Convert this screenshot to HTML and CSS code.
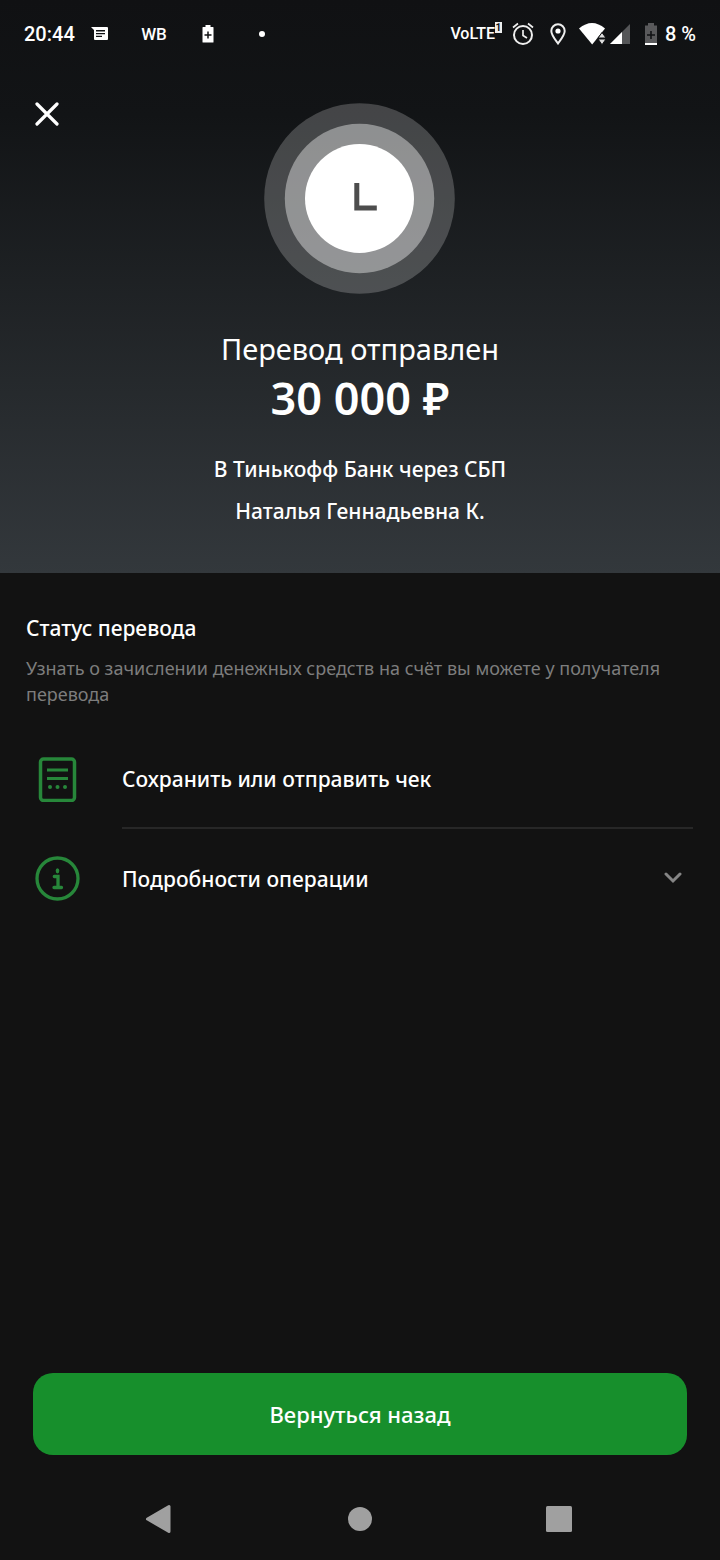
FILE: index.html
```html
<!DOCTYPE html>
<html lang="ru">
<head>
<meta charset="utf-8">
<meta name="viewport" content="width=device-width, initial-scale=1">
<title>Перевод отправлен</title>
<link rel="stylesheet" href="styles.css">
</head>
<body>
<div class="screen">
  <header class="hero">
    <div class="status-bar">
      <div class="status-left">
        <span class="clock">20:44</span>
        <span class="slot"><svg width="18" height="16" viewBox="0 0 18 16"><path fill="#fff" d="M0 1h16a1 1 0 0 1 1 1v11a1 1 0 0 1-1 1H4a1 1 0 0 1-1-1V4z"/><path stroke="#111214" stroke-width="1.400" d="M5 4.800h9M5 7.600h9M5 10.400h6"/></svg></span>
        <span class="slot app-name">WB</span>
        <span class="slot"><svg width="12" height="18" viewBox="0 0 12 18"><path fill="#fff" d="M3.500 0h5v2H11q.5 0 .5.500V17q0 .5-.5.500H1Q.5 17.500.5 17V2.500Q.5 2 1 2h2.500z"/><path stroke="#111214" stroke-width="1.500" d="M6 6.500v7M2.500 10h7"/></svg></span>
        <span class="slot"><span class="dot"></span></span>
      </div>
      <div class="status-right">
        <span class="volte"><span>VoLTE</span><span class="sim">1</span></span>
        <svg width="22" height="24" viewBox="0 0 22 24" fill="none" stroke="#eee"><circle cx="11" cy="13" r="9" stroke-width="2"/><path stroke-width="1.700" d="M11 8v5.500l4 2.500M1 5.500l5-4M21 5.500l-5-4"/></svg>
        <svg class="pin" width="16" height="22" viewBox="0 0 16 22"><path fill="none" stroke="#eee" stroke-width="2" d="M8 20.500C5 16.500 1.300 12 1.300 8a6.700 6.700 0 0 1 13.400 0c0 4-3.700 8.500-6.700 12.500z"/><circle cx="8" cy="8" r="2.600" fill="#fff"/></svg>
        <svg class="wifi" width="27" height="22" viewBox="0 0 27 22"><path fill="#fff" d="M0 5.500Q13-5.500 26 5.500L13.200 21.500z"/><path fill="#ddd" stroke="#111214" stroke-width="1" d="M19 15L23 9.500l4 5.500zM19 16L23 21.800l4-5.800z"/></svg>
        <svg class="signal" width="20" height="20" viewBox="0 0 20 20"><path fill="#555658" d="M0 20L20 0v20z"/><path fill="#fff" d="M0 20L12 8v12z"/></svg>
        <svg class="battery" width="12" height="22" viewBox="0 0 12 22"><path fill="#59595b" d="M3 0h6v2.500h3V20H0V2.500h3z"/><path fill="#fff" d="M0 20h12v2H0z"/><path stroke="#111214" stroke-width="1.600" d="M6 8v8M2 12h8"/></svg>
        <span>8 %</span>
      </div>
    </div>
    <button class="close" type="button" aria-label="Закрыть"><svg width="24" height="24" viewBox="0 0 24 24"><path stroke="#fff" stroke-width="3.200" stroke-linecap="round" d="M2 2l20 20M22 2L2 22"/></svg></button>
    <div class="halo"><svg width="192" height="192" viewBox="0 0 192 192"><circle cx="95.500" cy="96.500" r="95.300" fill="#fff" fill-opacity=".21"/><circle cx="95.500" cy="96.500" r="74.700" fill="#fff" fill-opacity=".4"/><circle cx="95.500" cy="96.500" r="54.500" fill="#fff"/><path fill="none" stroke="#4d4d4d" stroke-width="5" d="M92.800 81v25H112.800"/></svg></div>
    <h1 class="title">Перевод отправлен</h1>
    <p class="amount">30 000 ₽</p>
    <p class="detail">В Тинькофф Банк через СБП</p>
    <p class="detail">Наталья Геннадьевна К.</p>
  </header>
  <main class="content">
    <h2 class="section-title">Статус перевода</h2>
    <p class="note">Узнать о зачислении денежных средств на счёт вы можете у получателя перевода</p>
    <button class="row" type="button">
      <svg class="row-icon" width="46" height="46" viewBox="0 0 46 46"><rect x="5.500" y="3" width="34" height="41.500" rx="3" fill="none" stroke="#27873a" stroke-width="3.500"/><path stroke="#27873a" stroke-width="3.200" d="M12 14h21M12 22.500h21"/><g fill="#27873a"><circle cx="15" cy="31" r="2"/><circle cx="22.500" cy="31" r="2"/><circle cx="30" cy="31" r="2"/></g></svg>
      <span class="row-label">Сохранить или отправить чек</span>
    </button>
    <hr class="divider">
    <button class="row" type="button" aria-expanded="false">
      <svg class="row-icon" width="46" height="46" viewBox="0 0 46 46" fill="none" stroke="#27873a"><circle cx="22.500" cy="22.500" r="20.500" stroke-width="3.300"/><path stroke-width="3.300" stroke-linecap="round" d="M19.300 20.500h3.700V31M19 31.500h7.500"/><ellipse cx="22.500" cy="14.800" rx="1.800" ry="2.600" fill="#27873a" stroke="none"/></svg>
      <span class="row-label">Подробности операции</span>
      <svg width="18" height="14" viewBox="0 0 18 14"><path fill="none" stroke="#858585" stroke-width="3" stroke-linecap="round" d="M2 2l7 7 7-7"/></svg>
    </button>
  </main>
  <footer class="actions"><button class="primary" type="button">Вернуться назад</button></footer>
  <nav class="system-nav" aria-label="Система">
    <button type="button" aria-label="Назад"><svg width="28" height="30" viewBox="0 0 28 30"><path fill="#a0a0a0" stroke="#a0a0a0" stroke-width="3" stroke-linejoin="round" d="M24 2.500v25L2.500 15z"/></svg></button>
    <button type="button" aria-label="Домой"><svg width="26" height="26" viewBox="0 0 26 26"><circle cx="13" cy="13" r="12" fill="#a0a0a0"/></svg></button>
    <button type="button" aria-label="Недавние"><svg width="26" height="26" viewBox="0 0 26 26"><rect width="26" height="26" rx="1.500" fill="#a0a0a0"/></svg></button>
  </nav>
</div>
</body>
</html>
```
FILE: styles.css
```css
* { box-sizing: border-box; }
body { margin: 0; background: #121212; color: #fff; font-family: "Noto Sans", "Open Sans", sans-serif; font-size: 21px; font-weight: 500; line-height: 30px; }
h1, h2, p { margin: 0; }
svg { display: block; flex: none; }
button { margin: 0; padding: 0; border: 0; background: none; color: inherit; font: inherit; cursor: pointer; }
.screen { min-height: 100vh; display: flex; flex-direction: column; }
.hero { position: relative; padding-bottom: 41px; background: linear-gradient(#101113 0, #121416 20%, #33383c 100%); text-align: center; }
.status-bar { display: flex; justify-content: space-between; align-items: center; height: 67px; padding: 0 24px; font: 500 20px/24px Roboto, sans-serif; }
.status-left, .status-right { display: flex; align-items: center; }
.clock { width: 49px; white-space: nowrap; }
.slot { display: flex; justify-content: center; width: 54px; }
.app-name { font-size: 17px; }
.dot { width: 6px; height: 6px; border-radius: 50%; background: #fff; }
.volte { display: flex; align-items: flex-start; margin-right: 10px; font-size: 16px; }
.sim { width: 7px; height: 11px; background: #eee; color: #111214; font-size: 10px; font-weight: 700; line-height: 11px; text-align: center; }
.pin { margin-left: 16px; }
.wifi { margin-left: 13px; }
.signal { margin: 0 15px 0 4px; }
.battery { margin-right: 8px; }
.close { position: absolute; top: 96px; left: 29px; padding: 6px; }
.halo { display: flex; justify-content: center; margin-top: 35px; }
.title { margin-top: 36px; font-size: 29px; font-weight: 400; line-height: 38px; }
.amount { margin-bottom: 20px; font-size: 45px; font-weight: 600; line-height: 60px; }
.detail { padding: 6px 16px; }
.content { padding: 40px 26px 0; }
.section-title { font-size: 21px; font-weight: 500; }
.note { margin-top: 12px; color: #7d7d7d; font-size: 18px; font-weight: 400; line-height: 26px; }
.row { display: flex; align-items: center; width: 100%; height: 96px; padding: 0 12px 0 9px; text-align: left; }
.note + .row { margin-top: 24px; }
.row-icon { margin-right: 41px; }
.row-label { flex: 1; }
.divider { height: 2px; margin: 0 1px 2px 96px; border: 0; background: #272727; }
.actions { margin-top: auto; padding: 0 33px; }
.primary { width: 100%; height: 82px; border-radius: 20px; background: #178f2c; font-size: 22px; }
.system-nav { display: flex; justify-content: space-between; align-items: center; height: 105px; padding: 22px 148px 0 145px; }
```
